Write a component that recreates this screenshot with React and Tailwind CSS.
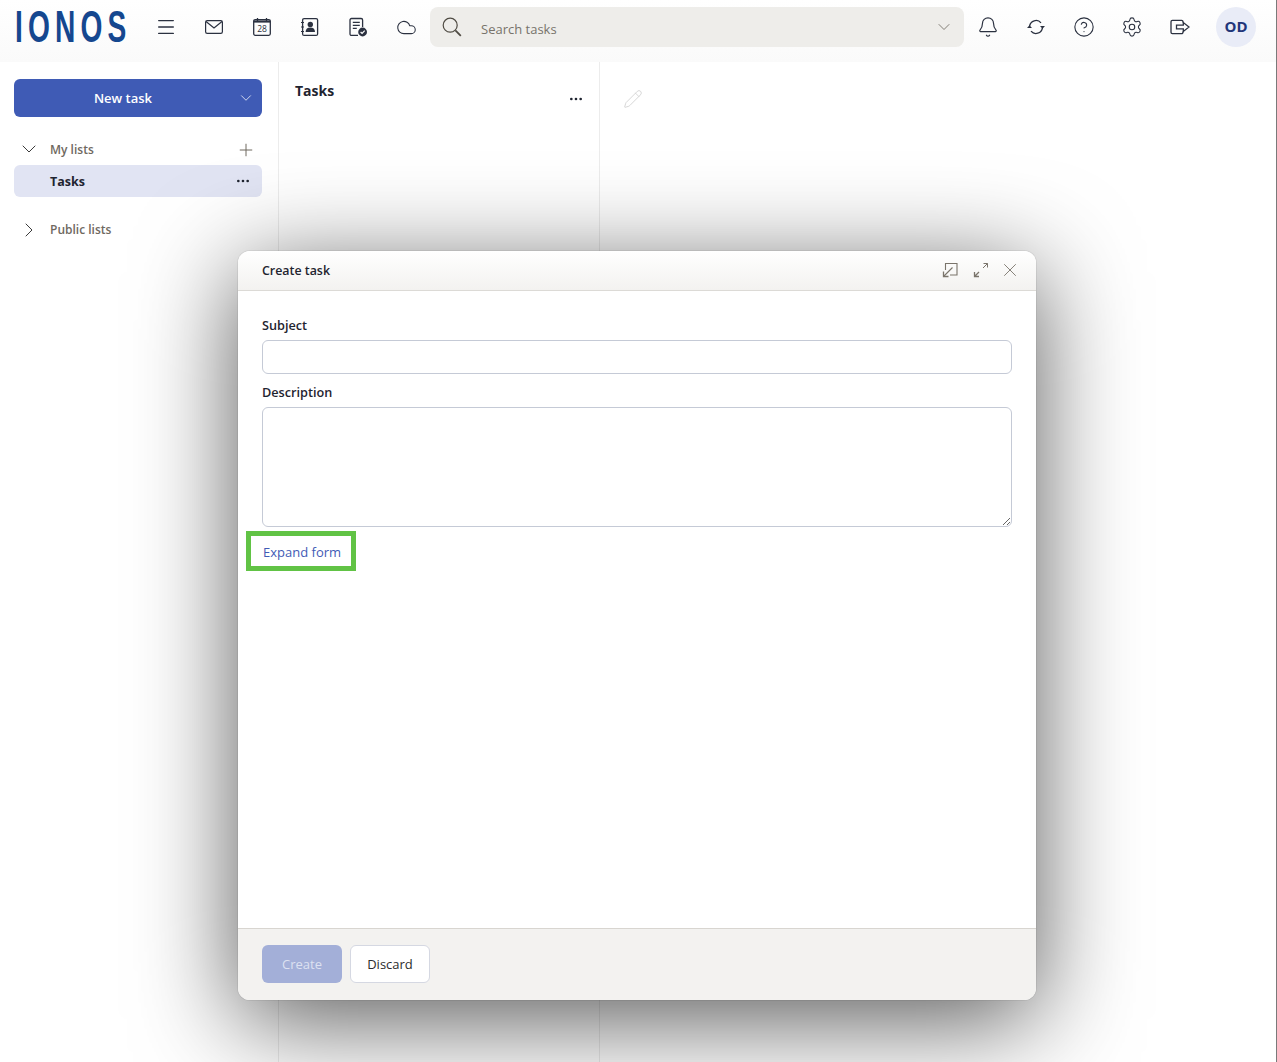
import React from 'react';
import { Menu, Bell, CircleHelp, Settings, ChevronDown, ChevronRight, Plus, Ellipsis, Pencil, X, Cloud } from 'lucide-react';

const IconBox = ({ children }) => (
  <div className="w-12 h-10 flex items-center justify-center text-[#2b3140]">{children}</div>
);

const SearchIcon = () => (
  <svg width="20" height="20" viewBox="0 0 20 20" fill="none" stroke="currentColor" strokeWidth="1.2">
    <circle cx="8.2" cy="8.2" r="7" />
    <path d="M13.4 13.4l5.4 5.4" strokeWidth="1.800" />
  </svg>
);

const MailIcon = () => (
  <svg width="20" height="20" viewBox="0 0 20 20" fill="none" stroke="currentColor" strokeWidth="1.2">
    <rect x="1.6" y="3.6" width="16.8" height="12.8" rx="1.6" />
    <path d="M2 4.5l8 6.5 8-6.5" />
  </svg>
);

const CalendarIcon = () => (
  <svg width="20" height="20" viewBox="0 0 20 20" fill="none">
    <rect x="1.7" y="2.6" width="16.6" height="15.7" rx="1.5" stroke="currentColor" strokeWidth="1.3" />
    <path d="M1.7 3.4h16.6v2.2H1.7z" fill="currentColor" />
    <path d="M5.5 1v3M14.5 1v3" stroke="currentColor" strokeWidth="1.3" />
    <text x="10" y="15" textAnchor="middle" fontSize="8.5" fill="currentColor" fontFamily="Open Sans, sans-serif">28</text>
  </svg>
);

const ContactIcon = () => (
  <svg width="20" height="20" viewBox="0 0 20 20" fill="none">
    <rect x="2.6" y="1.6" width="15" height="16.8" rx="1.5" stroke="currentColor" strokeWidth="1.3" />
    <circle cx="10.3" cy="7.4" r="2.7" fill="currentColor" />
    <path d="M5.6 15c0-3 2-4.4 4.7-4.4S15 12 15 15z" fill="currentColor" />
    <path d="M1 5.5h3M1 10h3M1 14.5h3" stroke="currentColor" strokeWidth="1.2" />
  </svg>
);

const TaskIcon = () => (
  <svg width="20" height="20" viewBox="0 0 20 20" fill="none">
    <path d="M10 18.4H3.5a1.5 1.5 0 0 1-1.5-1.5V3a1.5 1.5 0 0 1 1.5-1.5h9.6A1.5 1.5 0 0 1 14.6 3v7" stroke="currentColor" strokeWidth="1.3" />
    <path d="M4.8 5.4h7M4.8 8.4h7M4.8 11.4h4" stroke="currentColor" strokeWidth="1.2" />
    <circle cx="14.6" cy="15" r="4.4" fill="currentColor" />
    <path d="M12.6 15l1.5 1.5 2.6-2.8" stroke="white" strokeWidth="1.2" />
  </svg>
);

const SyncIcon = () => (
  <svg width="20" height="20" viewBox="0 0 20 20" fill="none" stroke="currentColor" strokeWidth="1.3">
    <path d="M3.6 9.2A6.5 6.5 0 0 1 15 5.8" />
    <path d="M16.4 10.8A6.5 6.5 0 0 1 5 14.2" />
    <path d="M14 9h5l-2.5 2.8z" fill="currentColor" stroke="none" />
    <path d="M1 11h5L3.5 8.2z" fill="currentColor" stroke="none" />
  </svg>
);

const LogoutIcon = () => (
  <svg width="20" height="20" viewBox="0 0 20 20" fill="none" stroke="currentColor" strokeWidth="1.3">
    <path d="M13 5.6V4.8a1.4 1.4 0 0 0-1.4-1.4H2.4A1.4 1.4 0 0 0 1 4.8v10.4a1.4 1.4 0 0 0 1.4 1.4h9.2a1.4 1.4 0 0 0 1.4-1.4v-.8" />
    <path d="M6.5 8.2h6.8V5.6L19 10l-5.700 4.400v-2.600H6.500z" />
  </svg>
);

const DockIcon = () => (
  <svg width="16" height="16" viewBox="0 0 16 16" fill="none" stroke="#7a746b" strokeWidth="1.1">
    <path d="M3.500 8V1.500h11.500v11.500H8" />
    <path d="M10.500 5.500L2 14" />
    <path d="M1.500 9.500v5h5" strokeWidth="1.300" />
  </svg>
);

const ExpandIcon = () => (
  <svg width="16" height="16" viewBox="0 0 16 16" fill="none" stroke="#7a746b" strokeWidth="1">
    <path d="M10 6L14.500 1.500M10.500 1.500h4V5.500" />
    <path d="M6 10L1.500 14.500M1.500 10v4.500H6" strokeWidth="1.300" />
  </svg>
);

const App = () => {
  return (
    <div className="relative h-[1062px] overflow-hidden bg-white border-r border-[#7a7a7a] font-['Open_Sans',sans-serif] text-[#1f2430]">
      <header className="h-[62px] flex bg-gradient-to-b from-white to-[#fafafa] pt-[7px]">
        <div className="w-[142px] h-10">
          <span className="block origin-left scale-x-[0.64] ml-[15px] font-['Liberation_Sans',sans-serif] font-bold text-[44px] leading-10 tracking-[8px] text-[#15478f]">
            IONOS
          </span>
        </div>
        <IconBox><Menu size={22} strokeWidth={1.4} /></IconBox>
        <IconBox><MailIcon /></IconBox>
        <IconBox><CalendarIcon /></IconBox>
        <IconBox><ContactIcon /></IconBox>
        <IconBox><TaskIcon /></IconBox>
        <IconBox><Cloud size={21} strokeWidth={1.2} /></IconBox>
        <div className="w-[534px] h-10 flex items-center bg-[#eeedea] rounded-lg">
          <div className="ml-[12px] text-[#4f4b43]"><SearchIcon /></div>
          <span className="ml-[19px] mt-[5px] text-[13px] flex-1 text-[#77736b]">Search tasks</span>
          <ChevronDown size={20} strokeWidth={1.1} className="mr-[10px] text-[#77736b]" />
        </div>
        <IconBox><Bell size={22} strokeWidth={1.3} /></IconBox>
        <IconBox><SyncIcon /></IconBox>
        <IconBox><CircleHelp size={22} strokeWidth={1.2} /></IconBox>
        <IconBox><Settings size={22} strokeWidth={1.2} /></IconBox>
        <IconBox><LogoutIcon /></IconBox>
        <div className="ml-3 w-10 h-10 rounded-full bg-[#e9ecf7] flex items-center justify-center text-[15px] font-bold text-[#22367a] pb-[2px]">OD</div>
      </header>

      <main className="flex h-[1000px]">
        <aside className="w-[279px] border-r border-[#ececec] pl-[14px] pr-4 pt-[17px]">
          <button className="relative w-[248px] h-[38px] rounded-md bg-[#3f5bb5] text-white text-[13px] font-semibold flex items-center justify-center pr-[30px] pt-[2px]">
            New task
            <ChevronDown size={18} strokeWidth={1} className="absolute right-[7px] top-[10px]" />
          </button>
          <div className="mt-4 h-[32px] flex items-center text-[#6f695f]">
            <ChevronDown size={24} strokeWidth={1} className="ml-[3px] text-[#3b3b3b]" />
            <span className="ml-[9px] mt-[2px] text-[12px] font-semibold flex-1">My lists</span>
            <Plus size={20} strokeWidth={1.2} className="mr-[6px] mt-[2px]" />
          </div>
          <div className="h-8 rounded-md bg-[#e1e4f3] flex items-center">
            <span className="ml-[36px] mt-[2px] text-[12.500px] font-bold flex-1">Tasks</span>
            <Ellipsis size={16} strokeWidth={2} className="mr-[11px]" />
          </div>
          <div className="mt-[17px] h-8 flex items-center text-[#6f695f]">
            <ChevronRight size={24} strokeWidth={1} className="ml-[3px] text-[#3b3b3b]" />
            <span className="ml-[9px] text-[12px] font-semibold">Public lists</span>
          </div>
        </aside>
        <section className="w-[321px] border-r border-[#ececec] relative pl-4 pr-4 pt-[18px]">
          <h2 className="text-[14px] font-bold leading-[22px]">Tasks</h2>
          <Ellipsis size={16} strokeWidth={2} className="absolute right-[15px] top-[29px]" />
        </section>
        <section className="flex-1 pl-[23px] pt-[27px]">
          <Pencil size={20} strokeWidth={1} className="text-[#cfcfcf]" />
        </section>
      </main>

      {/* create task dialog */}
      <div className="absolute left-[238px] top-[251px] w-[798px] h-[749px] flex flex-col bg-white rounded-xl overflow-hidden shadow-[0_0_0_1px_rgba(0,0,0,0.06),0_20px_100px_rgba(0,0,0,0.66)]">
        <div className="h-10 flex items-center bg-gradient-to-b from-white to-[#f3f2f0] border-b border-[#dcdad6] shrink-0">
          <span className="ml-6 mt-[2px] text-[12.4px] font-semibold flex-1">Create task</span>
          <div className="flex items-center mr-[15px] pb-[2px]">
            <DockIcon />
            <div className="ml-[15px]"><ExpandIcon /></div>
            <X size={22} strokeWidth={0.9} className="ml-[10px] text-[#6f695f]" />
          </div>
        </div>
        <div className="flex-1 px-6 pt-[24px]">
          <label className="block text-[12.700px] font-semibold leading-5 mb-[5px]">Subject</label>
          <div className="h-[34px] w-[750px] border border-[#c5cad6] rounded-md" />
          <label className="block text-[12.700px] font-semibold leading-5 mt-2 mb-[5px]">Description</label>
          <textarea className="block h-[120px] w-[750px] border border-[#c5cad6] rounded-md outline-none" />
          <div className="mt-1 -ml-4 w-[110px] h-[40px] border-[5px] border-[#61c345] flex items-center pl-3 pt-1 text-[13px] text-[#3f5bb5]">
            Expand form
          </div>
        </div>
        <div className="h-[72px] shrink-0 flex items-center gap-2 bg-[#f3f2f0] border-t border-[#d8d5d0] px-6 pb-[2px]">
          <button className="w-20 h-[38px] rounded-md bg-[#a3afd8] text-[#dde1f1] text-[13px] pt-[2px]">Create</button>
          <button className="w-20 h-[38px] rounded-md bg-white border border-[#d5d8e2] text-[13px] text-[#2c2c2c] pt-[2px]">Discard</button>
        </div>
      </div>
    </div>
  );
};

export default App;
